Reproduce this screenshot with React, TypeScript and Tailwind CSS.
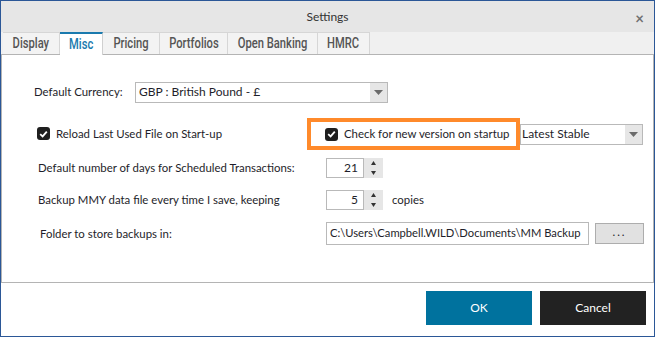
import { useState } from "react";

const tabs = ["Display", "Misc", "Pricing", "Portfolios", "Open Banking", "HMRC"];
const tabWidths: Record<string, string> = {
  Display: "w-[57px]",
  Misc: "w-[43px]",
  Pricing: "w-[57px]",
  Portfolios: "w-[68px]",
  "Open Banking": "w-[90px]",
  HMRC: "w-[52px]",
};

function Check() {
  return (
    <span className="w-[13px] h-[13px] rounded-[3px] bg-[#1f1f1f] flex items-center justify-center shrink-0">
      <svg width="9" height="8" viewBox="0 0 9 8">
        <path d="M1.2 4.2 L3.6 6.4 L7.8 1.6" fill="none" stroke="#fff" strokeWidth="1.8" />
      </svg>
    </span>
  );
}

function Arrow() {
  return (
    <svg width="9" height="5" viewBox="0 0 9 5">
      <path d="M0 0 H9 L4.5 5 Z" fill="#6b6b6b" />
    </svg>
  );
}

function Spinner({ value }: { value: string }) {
  return (
    <div className="flex h-[20px]">
      <div className="w-[38px] h-full border border-[#b9b9b9] flex items-center justify-end pr-[5px] text-[12px]">{value}</div>
      <div className="w-[19px] h-full bg-[#e6e6e6] flex flex-col items-center justify-between py-[3px]">
        <svg width="5" height="4" viewBox="0 0 5 4"><path d="M0 4 L2.5 0 L5 4 Z" fill="#333" /></svg>
        <svg width="5" height="4" viewBox="0 0 5 4"><path d="M0 0 L2.5 4 L5 0 Z" fill="#333" /></svg>
      </div>
    </div>
  );
}

export default function App() {
  const [active] = useState("Misc");

  return (
    <div
      className="w-[655px] h-[337px] border border-[#2b5797] bg-white flex flex-col text-[11.4px] text-[#1e1e2a] whitespace-nowrap"
      style={{ fontFamily: 'Lato, "Liberation Sans", sans-serif' }}
    >
      {/* title bar */}
      <div className="h-[31px] bg-[#e6e6e6] relative flex items-center justify-center text-[#333] text-[12px]">
        <span>Settings</span>
        <span className="absolute right-[10px] top-[6px] text-[#707070] text-[15px] font-bold">×</span>
      </div>

      {/* tabs */}
      <div className="h-[23px] bg-[#f0f0f0] flex items-end pl-[2px] border-b border-[#b4b4b4]">
        {tabs.map((t) =>
          t === active ? (
            <div
              key={t}
              className={`${tabWidths[t]} h-[23px] -mb-px bg-white border-t-2 border-[#1a7aae] border-r border-r-[#d0d0d0] flex items-center justify-center text-[#1a7aae]`}
            >
              <span className="scale-x-[0.8] font-medium text-[14px]" style={{ fontFamily: "Roboto, sans-serif" }}>{t}</span>
            </div>
          ) : (
            <div
              key={t}
              className={`${tabWidths[t]} h-[22px] bg-[#f3f3f3] border-t border-r border-[#d6d6d6] flex items-center justify-center text-[#555]`}
            >
              <span className="scale-x-[0.8] font-medium text-[14px]" style={{ fontFamily: "Roboto, sans-serif" }}>{t}</span>
            </div>
          )
        )}
      </div>

      {/* content */}
      <div className="h-[228px] border-x border-b border-[#b4b4b4] bg-white flex flex-col">
        <div className="flex items-center mt-[27px] h-[20px]">
          <span className="ml-[32px] w-[101px]">Default Currency:</span>
          <div className="w-[253px] h-[21px] border border-[#b9b9b9] flex items-center">
            <span className="flex-1 pl-[3px] text-[12px]">GBP : British Pound - £</span>
            <span className="w-[17px] h-full bg-[#e6e6e6] flex items-center justify-center"><Arrow /></span>
          </div>
        </div>

        <div className="flex items-center mt-[16px] h-[32px]">
          <div className="ml-[35px] w-[270px] flex items-center gap-[6px]">
            <Check />
            <span>Reload Last Used File on Start-up</span>
          </div>
          <div className="w-[213px] h-[32px] border-[4px] border-[#ff8a2b] flex items-center pl-[14px] gap-[6px]">
            <Check />
            <span>Check for new version on startup</span>
          </div>
          <div className="w-[123px] h-[21px] border border-[#b9b9b9] flex items-center">
            <span className="flex-1 pl-[1px] text-[12px]">Latest Stable</span>
            <span className="w-[17px] h-full bg-[#e6e6e6] flex items-center justify-center"><Arrow /></span>
          </div>
        </div>

        <div className="flex items-center mt-[8px] h-[20px]">
          <span className="ml-[36px] w-[288px]">Default number of days for Scheduled Transactions:</span>
          <Spinner value="21" />
        </div>

        <div className="flex items-center mt-[12px] h-[20px]">
          <span className="ml-[36px] w-[288px]">Backup MMY data file every time I save, keeping</span>
          <Spinner value="5" />
          <span className="ml-[9px]">copies</span>
        </div>

        <div className="flex items-center mt-[12px] h-[23px]">
          <span className="ml-[38px] w-[286px]">Folder to store backups in:</span>
          <div className="w-[263px] h-[23px] border border-[#b9b9b9] flex items-center pl-[3px] overflow-hidden text-[11.2px]">
            C:\Users\Campbell.WILD\Documents\MM Backup
          </div>
          <button className="ml-[6px] w-[49px] h-[21px] bg-[#e1e1e1] border border-[#adadad] flex items-center justify-center pb-[3px] tracking-[2px]">
            ...
          </button>
        </div>
      </div>

      {/* footer */}
      <div className="flex-1 flex justify-end items-start pt-[8px] pr-[8px] gap-[8px] text-[12px]">
        <button className="w-[106px] h-[34px] bg-[#00729e] text-white">OK</button>
        <button className="w-[106px] h-[34px] bg-[#222] text-white">Cancel</button>
      </div>
    </div>
  );
}
